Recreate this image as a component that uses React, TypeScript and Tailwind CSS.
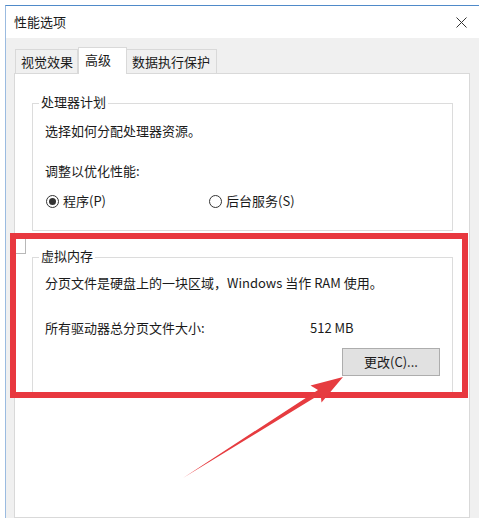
import React from 'react';

const font = { fontFamily: '"Noto Sans CJK SC", "Noto Sans", sans-serif' };

function GroupBox({ label, className, children }: { label: string; className?: string; children: React.ReactNode }) {
  return (
    <div className={`relative ml-[17px] w-[421px] border border-[#dcdcdc] ${className ?? ''}`}>
      <span className="absolute -top-[11px] left-[6px] bg-white px-[2px] leading-[18px]">{label}</span>
      {children}
    </div>
  );
}

function Radio({ checked, label }: { checked?: boolean; label: string }) {
  return (
    <label className="flex items-center gap-[4px]">
      <span className="flex h-[13px] w-[13px] items-center justify-center rounded-full border border-[#333]">
        {checked && <span className="h-[7px] w-[7px] rounded-full bg-[#333]" />}
      </span>
      <span>{label}</span>
    </label>
  );
}

export default function App() {
  return (
    <div
      className="relative h-[518px] w-[479px] overflow-hidden bg-white pl-[5px] pt-[5px] text-[13px] text-[#1a1a1a]"
      style={font}
    >
      <div className="flex h-full flex-col border-l border-t border-l-[#9bbbe0] border-t-[#4f8ac9]">
        {/* title bar */}
        <div className="flex h-[32px] shrink-0 items-center justify-between bg-white pl-[8px] pr-[12px]">
          <span>性能选项</span>
          <svg width="11" height="11" viewBox="0 0 11 11" className="mt-[1px]">
            <path d="M0.5 0.5 L10.5 10.5 M10.5 0.5 L0.5 10.5" stroke="#333" strokeWidth="1" />
          </svg>
        </div>

        <div className="flex flex-1 flex-col bg-[#f0f0f0] pt-[9px]">
          {/* tabs */}
          <div className="flex h-[26px] items-end pl-[9px]">
            <div className="flex h-[24px] w-[63px] items-center border border-b-0 border-[#d9d9d9] bg-[#f0f0f0] pl-[5px]">
              视觉效果
            </div>
            <div className="relative z-10 -mb-[1px] flex h-[27px] w-[49px] items-center border border-b-0 border-[#d9d9d9] bg-white pl-[6px] pb-[2px]">
              高级
            </div>
            <div className="flex h-[24px] w-[90px] items-center border border-b-0 border-l-0 border-[#d9d9d9] bg-[#f0f0f0] pl-[5px]">
              数据执行保护
            </div>
          </div>

          {/* tab panel */}
          <div className="ml-[8px] w-[456px] flex-1 border border-[#d9d9d9] bg-white pt-[29px]">
            <GroupBox label="处理器计划" className="pb-[19px] pl-[12px] pt-[17px] leading-[20px]">
              <div>选择如何分配处理器资源。</div>
              <div className="mt-[20px]">调整以优化性能:</div>
              <div className="mt-[10px] flex pl-[1px]">
                <div className="w-[163px]">
                  <Radio checked label="程序(P)" />
                </div>
                <Radio label="后台服务(S)" />
              </div>
            </GroupBox>

            <GroupBox label="虚拟内存" className="mt-[26px] pb-[16px] pl-[12px] pr-[12px] pt-[15px] leading-[20px]">
              <div>分页文件是硬盘上的一块区域，Windows 当作 RAM 使用。</div>
              <div className="mt-[25px] flex">
                <span className="w-[265px]">所有驱动器总分页文件大小:</span>
                <span>512 MB</span>
              </div>
              <div className="mt-[10px] flex justify-end">
                <button className="h-[28px] w-[98px] border border-[#adadad] bg-[#e1e1e1] text-[13px]">
                  更改(C)...
                </button>
              </div>
            </GroupBox>
          </div>
        </div>
      </div>

      {/* red highlight annotation */}
      <div className="pointer-events-none absolute left-[10px] top-[233px] h-[165px] w-[458px] border-[6px] border-[#e8383f]">
        <div className="h-[15px] w-[10px] border-b border-r border-[#b8b8b8] bg-white" />
      </div>

      {/* arrow annotation */}
      <svg className="pointer-events-none absolute left-0 top-0" width="479" height="518" viewBox="0 0 479 518">
        <polygon
          points="183,478 320.6,394.1 321.5,402.5 343,377 310.5,385.5 318,389.9"
          fill="#e63c40"
        />
      </svg>
    </div>
  );
}
